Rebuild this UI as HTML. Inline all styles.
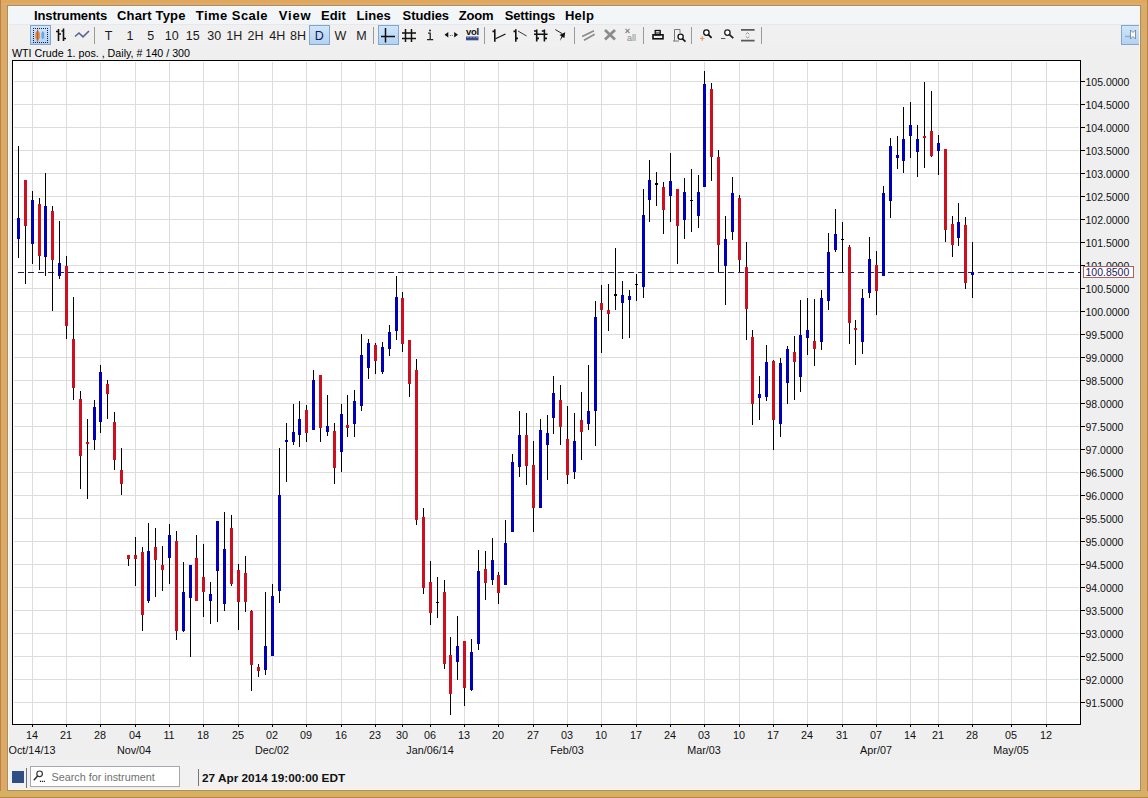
<!DOCTYPE html><html><head><meta charset="utf-8"><style>html,body{margin:0;padding:0;width:1148px;height:798px;overflow:hidden;background:#dba45f}svg{display:block}</style></head><body><svg width="1148" height="798" viewBox="0 0 1148 798" shape-rendering="crispEdges" font-family="Liberation Sans, sans-serif">
<defs><linearGradient id="btn" x1="0" y1="0" x2="0" y2="1"><stop offset="0" stop-color="#cfe6fc"/><stop offset="1" stop-color="#b2d2f2"/></linearGradient></defs>
<rect x="0" y="0" width="1148" height="798" fill="#dcaa64"/>
<rect x="0" y="0" width="1148" height="5" fill="#e2a85a"/>
<rect x="0" y="3" width="1148" height="2" fill="#dcac78"/>
<rect x="0" y="0" width="1" height="798" fill="#b8834a"/>
<rect x="1147" y="0" width="1" height="798" fill="#b8834a"/>
<rect x="1141" y="5" width="6" height="786" fill="#d9ac6a"/>
<rect x="0" y="791" width="1148" height="6" fill="#d8b062"/>
<rect x="0" y="797" width="1148" height="1" fill="#b8864a"/>
<rect x="7" y="5" width="1134" height="786" fill="#a88e68"/>
<rect x="8" y="6" width="1132" height="784" fill="#efefef"/>
<rect x="8" y="6" width="1132" height="18" fill="#f3f6f9"/>
<rect x="8" y="6" width="1132" height="1" fill="#fffbea"/>
<rect x="8" y="24" width="1132" height="1" fill="#e6e8ec"/>
<text x="34.0" y="19.5" font-size="13" font-weight="bold" fill="#000" textLength="73.2">Instruments</text>
<text x="117.0" y="19.5" font-size="13" font-weight="bold" fill="#000" textLength="68.4">Chart Type</text>
<text x="195.8" y="19.5" font-size="13" font-weight="bold" fill="#000" textLength="71.8">Time Scale</text>
<text x="278.8" y="19.5" font-size="13" font-weight="bold" fill="#000" textLength="31.9">View</text>
<text x="321.1" y="19.5" font-size="13" font-weight="bold" fill="#000" textLength="24.8">Edit</text>
<text x="356.4" y="19.5" font-size="13" font-weight="bold" fill="#000" textLength="34.4">Lines</text>
<text x="402.6" y="19.5" font-size="13" font-weight="bold" fill="#000" textLength="46.5">Studies</text>
<text x="458.7" y="19.5" font-size="13" font-weight="bold" fill="#000" textLength="34.8">Zoom</text>
<text x="504.7" y="19.5" font-size="13" font-weight="bold" fill="#000" textLength="50.5">Settings</text>
<text x="565.0" y="19.5" font-size="13" font-weight="bold" fill="#000" textLength="28.9">Help</text>
<rect x="8" y="25" width="1132" height="21" fill="#f0f0f0"/>
<rect x="30.5" y="25.5" width="20" height="19" fill="url(#btn)" stroke="#86a4c8"/>
<rect x="309.5" y="25.5" width="20" height="19" fill="url(#btn)" stroke="#86a4c8"/>
<rect x="378.5" y="25.5" width="20" height="19" fill="url(#btn)" stroke="#86a4c8"/>
<rect x="1121.5" y="25.5" width="18" height="19" fill="url(#btn)" stroke="#86a4c8"/>
<text x="108.5" y="39.5" font-size="12.5" text-anchor="middle" fill="#1a1a1a">T</text>
<text x="130" y="39.5" font-size="12.5" text-anchor="middle" fill="#1a1a1a">1</text>
<text x="150.7" y="39.5" font-size="12.5" text-anchor="middle" fill="#1a1a1a">5</text>
<text x="171.8" y="39.5" font-size="12.5" text-anchor="middle" fill="#1a1a1a">10</text>
<text x="192.8" y="39.5" font-size="12.5" text-anchor="middle" fill="#1a1a1a">15</text>
<text x="214.2" y="39.5" font-size="12.5" text-anchor="middle" fill="#1a1a1a">30</text>
<text x="234.3" y="39.5" font-size="12.5" text-anchor="middle" fill="#1a1a1a">1H</text>
<text x="255.6" y="39.5" font-size="12.5" text-anchor="middle" fill="#1a1a1a">2H</text>
<text x="277.3" y="39.5" font-size="12.5" text-anchor="middle" fill="#1a1a1a">4H</text>
<text x="298" y="39.5" font-size="12.5" text-anchor="middle" fill="#1a1a1a">8H</text>
<text x="319.3" y="39.5" font-size="12.5" text-anchor="middle" fill="#102050">D</text>
<text x="340.4" y="39.5" font-size="12.5" text-anchor="middle" fill="#1a1a1a">W</text>
<text x="361.4" y="39.5" font-size="12.5" text-anchor="middle" fill="#1a1a1a">M</text>
<g shape-rendering="auto">
<rect x="33" y="28" width="1" height="1" fill="#1a1a3a"/>
<rect x="33" y="42" width="1" height="1" fill="#1a1a3a"/>
<rect x="35" y="28" width="1" height="1" fill="#1a1a3a"/>
<rect x="35" y="42" width="1" height="1" fill="#1a1a3a"/>
<rect x="37" y="28" width="1" height="1" fill="#1a1a3a"/>
<rect x="37" y="42" width="1" height="1" fill="#1a1a3a"/>
<rect x="39" y="28" width="1" height="1" fill="#1a1a3a"/>
<rect x="39" y="42" width="1" height="1" fill="#1a1a3a"/>
<rect x="41" y="28" width="1" height="1" fill="#1a1a3a"/>
<rect x="41" y="42" width="1" height="1" fill="#1a1a3a"/>
<rect x="43" y="28" width="1" height="1" fill="#1a1a3a"/>
<rect x="43" y="42" width="1" height="1" fill="#1a1a3a"/>
<rect x="45" y="28" width="1" height="1" fill="#1a1a3a"/>
<rect x="45" y="42" width="1" height="1" fill="#1a1a3a"/>
<rect x="47" y="28" width="1" height="1" fill="#1a1a3a"/>
<rect x="47" y="42" width="1" height="1" fill="#1a1a3a"/>
<rect x="33" y="30" width="1" height="1" fill="#1a1a3a"/>
<rect x="47" y="30" width="1" height="1" fill="#1a1a3a"/>
<rect x="33" y="32" width="1" height="1" fill="#1a1a3a"/>
<rect x="47" y="32" width="1" height="1" fill="#1a1a3a"/>
<rect x="33" y="34" width="1" height="1" fill="#1a1a3a"/>
<rect x="47" y="34" width="1" height="1" fill="#1a1a3a"/>
<rect x="33" y="36" width="1" height="1" fill="#1a1a3a"/>
<rect x="47" y="36" width="1" height="1" fill="#1a1a3a"/>
<rect x="33" y="38" width="1" height="1" fill="#1a1a3a"/>
<rect x="47" y="38" width="1" height="1" fill="#1a1a3a"/>
<rect x="33" y="40" width="1" height="1" fill="#1a1a3a"/>
<rect x="47" y="40" width="1" height="1" fill="#1a1a3a"/>
<path d="M37.6 30 L39.8 33 L39.8 38 L37.6 41 L35.4 38 L35.4 33 Z" fill="#e8803a"/>
<rect x="37.1" y="29.5" width="1" height="12" fill="#b06030"/>
<path d="M42.8 31 L44.2 33 L44.2 37.5 L42.8 39.5 L41.4 37.5 L41.4 33 Z" fill="#6aa4e0"/>
<path d="M58.5 29 V41 M56 31.5 H58.5 M58.5 34 H61 M63.5 28.5 V41 M61.5 31 H63.5 M63.5 38.5 H66" stroke="#111" stroke-width="1.6" fill="none"/>
<polyline points="75,36.5 79,33 83,36.8 89,31" stroke="#5a6488" stroke-width="1.6" fill="none"/>
<path d="M385.5 28 V42.5 M381 36.5 H395" stroke="#111" stroke-width="1.5" fill="none"/>
<path d="M405.5 29 V42 M411.5 29 V42 M402 33 H416 M402 38.5 H416" stroke="#111" stroke-width="1.5" fill="none"/>
<circle cx="430" cy="30.5" r="1" fill="#222"/>
<path d="M428 33.2 H430.2 V39.5 M427 39.6 H433.2" stroke="#222" stroke-width="1.3" fill="none"/>
<path d="M444.5 34.7 L448.3 32 L448.3 37.4 Z M458 34.7 L454.2 32 L454.2 37.4 Z" fill="#111"/>
<circle cx="450.3" cy="35.5" r="0.6" fill="#555"/><circle cx="452.2" cy="35.5" r="0.6" fill="#555"/>
<text x="466" y="35.2" font-size="9.5" font-weight="bold" fill="#111" letter-spacing="-0.3">vol</text>
<rect x="466" y="36.5" width="12.5" height="3.8" fill="#3a4a8a"/>
<path d="M468 36.5 V38 M471 36.5 V38 M474 36.5 V38 M477 36.5 V38" stroke="#c8d0f0" stroke-width="0.8"/>
<path d="M494.8 29.2 V41.7 M492.5 31.4 H494.8" stroke="#111" stroke-width="1.6" fill="none"/>
<path d="M495.5 38.8 L505.5 34" stroke="#111" stroke-width="1.2" fill="none"/>
<path d="M515.8 29.2 V41.7 M513.5 31.4 H515.8 M515.8 38.4 H518" stroke="#111" stroke-width="1.6" fill="none"/>
<path d="M518 31 L526.6 36" stroke="#222" stroke-width="0.9" fill="none"/>
<path d="M536.7 29.5 V41.5 M544.4 29.5 V41.5 M534 34.3 H547.6 M534 31 H536.7 M541.8 31 H544.4 M536.7 38.4 H539 M544.4 38.4 H547" stroke="#111" stroke-width="1.6" fill="none"/>
<path d="M555.3 29.6 L562 33.5" stroke="#222" stroke-width="1" fill="none"/>
<path d="M565.2 32.2 L559.5 35 L561.5 36.2 L559.8 41 L562.6 37 L564.4 38 Z" fill="#111"/>
<path d="M582.2 36.5 L594 30.7 M584 40.2 L594.7 34.3" stroke="#8a8a8a" stroke-width="1.7" fill="none"/>
<path d="M605 30 L615 39.5 M615 30 L605 39.5" stroke="#8c8c8c" stroke-width="2.8" fill="none"/>
<path d="M625.5 28.8 L629.5 33 M629.5 28.8 L625.5 33" stroke="#8a8a8a" stroke-width="1.2" fill="none"/>
<text x="627" y="41" font-size="9" fill="#8a8a8a">all</text>
<rect x="655.2" y="30.5" width="5" height="4.5" fill="none" stroke="#111" stroke-width="1.3"/>
<path d="M655.5 33 H660" stroke="#111" stroke-width="1"/>
<rect x="653" y="34.8" width="10" height="4" fill="none" stroke="#111" stroke-width="1.6"/>
<path d="M674.5 40.8 V29.5 H680 V33" stroke="#777" stroke-width="1" fill="none"/>
<path d="M673 41 H679" stroke="#777" stroke-width="1" fill="none"/>
<circle cx="680.6" cy="36.8" r="2.6" fill="#fff" stroke="#111" stroke-width="1.3"/>
<path d="M682.5 38.8 L685.5 41.6" stroke="#111" stroke-width="1.6"/>
<circle cx="706.4" cy="32.6" r="2.7" fill="#fff" stroke="#111" stroke-width="1.3"/>
<path d="M708.4 34.6 L711.6 37.9" stroke="#111" stroke-width="1.7"/>
<path d="M700 38.5 H704.5 M702.2 36.3 V40.8" stroke="#e89a5a" stroke-width="1.2"/>
<circle cx="727.4" cy="32.6" r="2.7" fill="#fff" stroke="#222" stroke-width="1.3"/>
<path d="M729.4 34.6 L733.3 38.2" stroke="#222" stroke-width="1.7"/>
<path d="M721 38.5 H725.3" stroke="#555" stroke-width="1"/>
<path d="M741 29.8 H754.6 M741 40.7 H754.6" stroke="#5a5a5a" stroke-width="1.7"/>
<path d="M745.8 34.3 L747.6 32.6 L749.4 34.3 M745.8 36.3 L747.6 38 L749.4 36.3" stroke="#888" stroke-width="0.9" fill="none"/>
<path d="M1125 36.5 H1131" stroke="#8ab0d8" stroke-width="1.5"/>
<path d="M1130.5 30 L1133 32.5 L1135.5 30 V39 L1133 36.5 L1130.5 39 Z" fill="#fafcff" stroke="#6a7a90" stroke-width="0.8"/>
</g>
<rect x="94" y="27" width="1" height="17" fill="#9a9a9a"/>
<rect x="373" y="27" width="1" height="17" fill="#9a9a9a"/>
<rect x="484" y="27" width="1" height="17" fill="#9a9a9a"/>
<rect x="574" y="27" width="1" height="17" fill="#9a9a9a"/>
<rect x="643" y="27" width="1" height="17" fill="#9a9a9a"/>
<rect x="691" y="27" width="1" height="17" fill="#9a9a9a"/>
<rect x="761" y="27" width="1" height="17" fill="#9a9a9a"/>
<text x="12" y="56.5" font-size="10.7" fill="#000">WTI Crude 1. pos. , Daily, # 140 / 300</text>
<rect x="12" y="60" width="1069" height="665" fill="#ffffff"/>
<rect x="32" y="62" width="1" height="662" fill="#dcdcdc"/>
<rect x="66" y="62" width="1" height="662" fill="#dcdcdc"/>
<rect x="100" y="62" width="1" height="662" fill="#dcdcdc"/>
<rect x="135" y="62" width="1" height="662" fill="#dcdcdc"/>
<rect x="169" y="62" width="1" height="662" fill="#dcdcdc"/>
<rect x="203" y="62" width="1" height="662" fill="#dcdcdc"/>
<rect x="238" y="62" width="1" height="662" fill="#dcdcdc"/>
<rect x="272" y="62" width="1" height="662" fill="#dcdcdc"/>
<rect x="306" y="62" width="1" height="662" fill="#dcdcdc"/>
<rect x="341" y="62" width="1" height="662" fill="#dcdcdc"/>
<rect x="375" y="62" width="1" height="662" fill="#dcdcdc"/>
<rect x="402" y="62" width="1" height="662" fill="#dcdcdc"/>
<rect x="430" y="62" width="1" height="662" fill="#dcdcdc"/>
<rect x="464" y="62" width="1" height="662" fill="#dcdcdc"/>
<rect x="498" y="62" width="1" height="662" fill="#dcdcdc"/>
<rect x="533" y="62" width="1" height="662" fill="#dcdcdc"/>
<rect x="567" y="62" width="1" height="662" fill="#dcdcdc"/>
<rect x="601" y="62" width="1" height="662" fill="#dcdcdc"/>
<rect x="636" y="62" width="1" height="662" fill="#dcdcdc"/>
<rect x="670" y="62" width="1" height="662" fill="#dcdcdc"/>
<rect x="704" y="62" width="1" height="662" fill="#dcdcdc"/>
<rect x="739" y="62" width="1" height="662" fill="#dcdcdc"/>
<rect x="773" y="62" width="1" height="662" fill="#dcdcdc"/>
<rect x="807" y="62" width="1" height="662" fill="#dcdcdc"/>
<rect x="842" y="62" width="1" height="662" fill="#dcdcdc"/>
<rect x="876" y="62" width="1" height="662" fill="#dcdcdc"/>
<rect x="910" y="62" width="1" height="662" fill="#dcdcdc"/>
<rect x="938" y="62" width="1" height="662" fill="#dcdcdc"/>
<rect x="972" y="62" width="1" height="662" fill="#dcdcdc"/>
<rect x="1011" y="62" width="1" height="662" fill="#dcdcdc"/>
<rect x="1046" y="62" width="1" height="662" fill="#dcdcdc"/>
<rect x="14" y="81" width="1065" height="1" fill="#dcdcdc"/>
<rect x="14" y="104" width="1065" height="1" fill="#dcdcdc"/>
<rect x="14" y="127" width="1065" height="1" fill="#dcdcdc"/>
<rect x="14" y="150" width="1065" height="1" fill="#dcdcdc"/>
<rect x="14" y="173" width="1065" height="1" fill="#dcdcdc"/>
<rect x="14" y="196" width="1065" height="1" fill="#dcdcdc"/>
<rect x="14" y="219" width="1065" height="1" fill="#dcdcdc"/>
<rect x="14" y="242" width="1065" height="1" fill="#dcdcdc"/>
<rect x="14" y="265" width="1065" height="1" fill="#dcdcdc"/>
<rect x="14" y="288" width="1065" height="1" fill="#dcdcdc"/>
<rect x="14" y="311" width="1065" height="1" fill="#dcdcdc"/>
<rect x="14" y="334" width="1065" height="1" fill="#dcdcdc"/>
<rect x="14" y="357" width="1065" height="1" fill="#dcdcdc"/>
<rect x="14" y="380" width="1065" height="1" fill="#dcdcdc"/>
<rect x="14" y="403" width="1065" height="1" fill="#dcdcdc"/>
<rect x="14" y="426" width="1065" height="1" fill="#dcdcdc"/>
<rect x="14" y="449" width="1065" height="1" fill="#dcdcdc"/>
<rect x="14" y="472" width="1065" height="1" fill="#dcdcdc"/>
<rect x="14" y="495" width="1065" height="1" fill="#dcdcdc"/>
<rect x="14" y="518" width="1065" height="1" fill="#dcdcdc"/>
<rect x="14" y="541" width="1065" height="1" fill="#dcdcdc"/>
<rect x="14" y="564" width="1065" height="1" fill="#dcdcdc"/>
<rect x="14" y="587" width="1065" height="1" fill="#dcdcdc"/>
<rect x="14" y="610" width="1065" height="1" fill="#dcdcdc"/>
<rect x="14" y="633" width="1065" height="1" fill="#dcdcdc"/>
<rect x="14" y="656" width="1065" height="1" fill="#dcdcdc"/>
<rect x="14" y="679" width="1065" height="1" fill="#dcdcdc"/>
<rect x="14" y="702" width="1065" height="1" fill="#dcdcdc"/>
<g fill="#20205a">
<rect x="18" y="272" width="6" height="1"/>
<rect x="28" y="272" width="6" height="1"/>
<rect x="38" y="272" width="6" height="1"/>
<rect x="48" y="272" width="6" height="1"/>
<rect x="58" y="272" width="6" height="1"/>
<rect x="68" y="272" width="6" height="1"/>
<rect x="78" y="272" width="6" height="1"/>
<rect x="88" y="272" width="6" height="1"/>
<rect x="98" y="272" width="6" height="1"/>
<rect x="108" y="272" width="6" height="1"/>
<rect x="118" y="272" width="6" height="1"/>
<rect x="128" y="272" width="6" height="1"/>
<rect x="138" y="272" width="6" height="1"/>
<rect x="148" y="272" width="6" height="1"/>
<rect x="158" y="272" width="6" height="1"/>
<rect x="168" y="272" width="6" height="1"/>
<rect x="178" y="272" width="6" height="1"/>
<rect x="188" y="272" width="6" height="1"/>
<rect x="198" y="272" width="6" height="1"/>
<rect x="208" y="272" width="6" height="1"/>
<rect x="218" y="272" width="6" height="1"/>
<rect x="228" y="272" width="6" height="1"/>
<rect x="238" y="272" width="6" height="1"/>
<rect x="248" y="272" width="6" height="1"/>
<rect x="258" y="272" width="6" height="1"/>
<rect x="268" y="272" width="6" height="1"/>
<rect x="278" y="272" width="6" height="1"/>
<rect x="288" y="272" width="6" height="1"/>
<rect x="298" y="272" width="6" height="1"/>
<rect x="308" y="272" width="6" height="1"/>
<rect x="318" y="272" width="6" height="1"/>
<rect x="328" y="272" width="6" height="1"/>
<rect x="338" y="272" width="6" height="1"/>
<rect x="348" y="272" width="6" height="1"/>
<rect x="358" y="272" width="6" height="1"/>
<rect x="368" y="272" width="6" height="1"/>
<rect x="378" y="272" width="6" height="1"/>
<rect x="388" y="272" width="6" height="1"/>
<rect x="398" y="272" width="6" height="1"/>
<rect x="408" y="272" width="6" height="1"/>
<rect x="418" y="272" width="6" height="1"/>
<rect x="428" y="272" width="6" height="1"/>
<rect x="438" y="272" width="6" height="1"/>
<rect x="448" y="272" width="6" height="1"/>
<rect x="458" y="272" width="6" height="1"/>
<rect x="468" y="272" width="6" height="1"/>
<rect x="478" y="272" width="6" height="1"/>
<rect x="488" y="272" width="6" height="1"/>
<rect x="498" y="272" width="6" height="1"/>
<rect x="508" y="272" width="6" height="1"/>
<rect x="518" y="272" width="6" height="1"/>
<rect x="528" y="272" width="6" height="1"/>
<rect x="538" y="272" width="6" height="1"/>
<rect x="548" y="272" width="6" height="1"/>
<rect x="558" y="272" width="6" height="1"/>
<rect x="568" y="272" width="6" height="1"/>
<rect x="578" y="272" width="6" height="1"/>
<rect x="588" y="272" width="6" height="1"/>
<rect x="598" y="272" width="6" height="1"/>
<rect x="608" y="272" width="6" height="1"/>
<rect x="618" y="272" width="6" height="1"/>
<rect x="628" y="272" width="6" height="1"/>
<rect x="638" y="272" width="6" height="1"/>
<rect x="648" y="272" width="6" height="1"/>
<rect x="658" y="272" width="6" height="1"/>
<rect x="668" y="272" width="6" height="1"/>
<rect x="678" y="272" width="6" height="1"/>
<rect x="688" y="272" width="6" height="1"/>
<rect x="698" y="272" width="6" height="1"/>
<rect x="708" y="272" width="6" height="1"/>
<rect x="718" y="272" width="6" height="1"/>
<rect x="728" y="272" width="6" height="1"/>
<rect x="738" y="272" width="6" height="1"/>
<rect x="748" y="272" width="6" height="1"/>
<rect x="758" y="272" width="6" height="1"/>
<rect x="768" y="272" width="6" height="1"/>
<rect x="778" y="272" width="6" height="1"/>
<rect x="788" y="272" width="6" height="1"/>
<rect x="798" y="272" width="6" height="1"/>
<rect x="808" y="272" width="6" height="1"/>
<rect x="818" y="272" width="6" height="1"/>
<rect x="828" y="272" width="6" height="1"/>
<rect x="838" y="272" width="6" height="1"/>
<rect x="848" y="272" width="6" height="1"/>
<rect x="858" y="272" width="6" height="1"/>
<rect x="868" y="272" width="6" height="1"/>
<rect x="878" y="272" width="6" height="1"/>
<rect x="888" y="272" width="6" height="1"/>
<rect x="898" y="272" width="6" height="1"/>
<rect x="908" y="272" width="6" height="1"/>
<rect x="918" y="272" width="6" height="1"/>
<rect x="928" y="272" width="6" height="1"/>
<rect x="938" y="272" width="6" height="1"/>
<rect x="948" y="272" width="6" height="1"/>
<rect x="958" y="272" width="6" height="1"/>
<rect x="968" y="272" width="6" height="1"/>
<rect x="978" y="272" width="6" height="1"/>
<rect x="988" y="272" width="6" height="1"/>
<rect x="998" y="272" width="6" height="1"/>
<rect x="1008" y="272" width="6" height="1"/>
<rect x="1018" y="272" width="6" height="1"/>
<rect x="1028" y="272" width="6" height="1"/>
<rect x="1038" y="272" width="6" height="1"/>
<rect x="1048" y="272" width="6" height="1"/>
<rect x="1058" y="272" width="6" height="1"/>
<rect x="1068" y="272" width="6" height="1"/>
<rect x="1078" y="272" width="2" height="1"/>
</g>
<rect x="18" y="146" width="1" height="112" fill="#000"/>
<rect x="17" y="218" width="3" height="21" fill="#0000b8"/>
<rect x="25" y="180" width="1" height="104" fill="#000"/>
<rect x="24" y="180" width="3" height="46" fill="#cc1020"/>
<rect x="32" y="191" width="1" height="73" fill="#000"/>
<rect x="31" y="200" width="3" height="44" fill="#0000b8"/>
<rect x="39" y="198" width="1" height="72" fill="#000"/>
<rect x="38" y="204" width="3" height="52" fill="#cc1020"/>
<rect x="45" y="173" width="1" height="103" fill="#000"/>
<rect x="44" y="206" width="3" height="51" fill="#0000b8"/>
<rect x="52" y="206" width="1" height="105" fill="#000"/>
<rect x="51" y="211" width="3" height="49" fill="#cc1020"/>
<rect x="59" y="221" width="1" height="58" fill="#000"/>
<rect x="58" y="263" width="3" height="13" fill="#0000b8"/>
<rect x="66" y="256" width="1" height="83" fill="#000"/>
<rect x="65" y="266" width="3" height="60" fill="#cc1020"/>
<rect x="73" y="297" width="1" height="103" fill="#000"/>
<rect x="72" y="339" width="3" height="49" fill="#cc1020"/>
<rect x="80" y="391" width="1" height="98" fill="#000"/>
<rect x="79" y="399" width="3" height="57" fill="#cc1020"/>
<rect x="87" y="419" width="1" height="80" fill="#000"/>
<rect x="86" y="442" width="3" height="2" fill="#cc1020"/>
<rect x="94" y="400" width="1" height="50" fill="#000"/>
<rect x="93" y="407" width="3" height="33" fill="#0000b8"/>
<rect x="100" y="365" width="1" height="68" fill="#000"/>
<rect x="99" y="372" width="3" height="50" fill="#0000b8"/>
<rect x="107" y="380" width="1" height="39" fill="#000"/>
<rect x="106" y="384" width="3" height="10" fill="#cc1020"/>
<rect x="114" y="412" width="1" height="58" fill="#000"/>
<rect x="113" y="422" width="3" height="38" fill="#cc1020"/>
<rect x="121" y="448" width="1" height="47" fill="#000"/>
<rect x="120" y="470" width="3" height="14" fill="#cc1020"/>
<rect x="128" y="555" width="1" height="11" fill="#000"/>
<rect x="127" y="555" width="3" height="4" fill="#cc1020"/>
<rect x="135" y="537" width="1" height="49" fill="#000"/>
<rect x="134" y="555" width="3" height="4" fill="#cc1020"/>
<rect x="142" y="547" width="1" height="84" fill="#000"/>
<rect x="141" y="552" width="3" height="63" fill="#cc1020"/>
<rect x="148" y="523" width="1" height="80" fill="#000"/>
<rect x="147" y="551" width="3" height="50" fill="#0000b8"/>
<rect x="155" y="528" width="1" height="69" fill="#000"/>
<rect x="154" y="547" width="3" height="13" fill="#cc1020"/>
<rect x="162" y="546" width="1" height="45" fill="#000"/>
<rect x="161" y="565" width="3" height="5" fill="#cc1020"/>
<rect x="169" y="524" width="1" height="60" fill="#000"/>
<rect x="168" y="535" width="3" height="23" fill="#0000b8"/>
<rect x="176" y="531" width="1" height="109" fill="#000"/>
<rect x="175" y="541" width="3" height="90" fill="#cc1020"/>
<rect x="183" y="562" width="1" height="70" fill="#000"/>
<rect x="182" y="592" width="3" height="39" fill="#0000b8"/>
<rect x="190" y="565" width="1" height="92" fill="#000"/>
<rect x="189" y="565" width="3" height="33" fill="#0000b8"/>
<rect x="196" y="535" width="1" height="66" fill="#000"/>
<rect x="195" y="558" width="3" height="43" fill="#cc1020"/>
<rect x="203" y="544" width="1" height="73" fill="#000"/>
<rect x="202" y="577" width="3" height="15" fill="#cc1020"/>
<rect x="210" y="582" width="1" height="42" fill="#000"/>
<rect x="209" y="594" width="3" height="7" fill="#0000b8"/>
<rect x="217" y="521" width="1" height="101" fill="#000"/>
<rect x="216" y="521" width="3" height="50" fill="#0000b8"/>
<rect x="224" y="512" width="1" height="99" fill="#000"/>
<rect x="223" y="549" width="3" height="55" fill="#0000b8"/>
<rect x="231" y="515" width="1" height="71" fill="#000"/>
<rect x="230" y="528" width="3" height="56" fill="#cc1020"/>
<rect x="238" y="564" width="1" height="66" fill="#000"/>
<rect x="237" y="570" width="3" height="32" fill="#cc1020"/>
<rect x="245" y="556" width="1" height="56" fill="#000"/>
<rect x="244" y="573" width="3" height="29" fill="#cc1020"/>
<rect x="251" y="610" width="1" height="81" fill="#000"/>
<rect x="250" y="611" width="3" height="54" fill="#cc1020"/>
<rect x="258" y="664" width="1" height="13" fill="#000"/>
<rect x="257" y="667" width="3" height="4" fill="#cc1020"/>
<rect x="265" y="592" width="1" height="83" fill="#000"/>
<rect x="264" y="646" width="3" height="24" fill="#0000b8"/>
<rect x="272" y="584" width="1" height="72" fill="#000"/>
<rect x="271" y="596" width="3" height="60" fill="#0000b8"/>
<rect x="279" y="448" width="1" height="155" fill="#000"/>
<rect x="278" y="495" width="3" height="96" fill="#0000b8"/>
<rect x="286" y="423" width="1" height="59" fill="#000"/>
<rect x="285" y="440" width="3" height="2" fill="#0000b8"/>
<rect x="293" y="404" width="1" height="41" fill="#000"/>
<rect x="292" y="432" width="3" height="10" fill="#0000b8"/>
<rect x="299" y="401" width="1" height="46" fill="#000"/>
<rect x="298" y="419" width="3" height="16" fill="#0000b8"/>
<rect x="306" y="405" width="1" height="37" fill="#000"/>
<rect x="305" y="410" width="3" height="23" fill="#cc1020"/>
<rect x="313" y="370" width="1" height="60" fill="#000"/>
<rect x="312" y="380" width="3" height="50" fill="#0000b8"/>
<rect x="320" y="375" width="1" height="67" fill="#000"/>
<rect x="319" y="375" width="3" height="53" fill="#cc1020"/>
<rect x="327" y="395" width="1" height="41" fill="#000"/>
<rect x="326" y="426" width="3" height="6" fill="#0000b8"/>
<rect x="334" y="423" width="1" height="61" fill="#000"/>
<rect x="333" y="431" width="3" height="37" fill="#cc1020"/>
<rect x="341" y="404" width="1" height="68" fill="#000"/>
<rect x="340" y="414" width="3" height="38" fill="#0000b8"/>
<rect x="347" y="395" width="1" height="42" fill="#000"/>
<rect x="346" y="425" width="3" height="3" fill="#cc1020"/>
<rect x="354" y="390" width="1" height="47" fill="#000"/>
<rect x="353" y="401" width="3" height="23" fill="#0000b8"/>
<rect x="361" y="334" width="1" height="77" fill="#000"/>
<rect x="360" y="355" width="3" height="51" fill="#0000b8"/>
<rect x="368" y="339" width="1" height="40" fill="#000"/>
<rect x="367" y="343" width="3" height="25" fill="#0000b8"/>
<rect x="375" y="343" width="1" height="31" fill="#000"/>
<rect x="374" y="345" width="3" height="16" fill="#cc1020"/>
<rect x="382" y="342" width="1" height="32" fill="#000"/>
<rect x="381" y="347" width="3" height="25" fill="#0000b8"/>
<rect x="389" y="325" width="1" height="31" fill="#000"/>
<rect x="388" y="332" width="3" height="17" fill="#0000b8"/>
<rect x="396" y="276" width="1" height="64" fill="#000"/>
<rect x="395" y="297" width="3" height="34" fill="#0000b8"/>
<rect x="402" y="292" width="1" height="60" fill="#000"/>
<rect x="401" y="298" width="3" height="46" fill="#cc1020"/>
<rect x="409" y="340" width="1" height="57" fill="#000"/>
<rect x="408" y="340" width="3" height="44" fill="#cc1020"/>
<rect x="416" y="359" width="1" height="166" fill="#000"/>
<rect x="415" y="370" width="3" height="150" fill="#cc1020"/>
<rect x="423" y="508" width="1" height="86" fill="#000"/>
<rect x="422" y="517" width="3" height="71" fill="#cc1020"/>
<rect x="430" y="561" width="1" height="64" fill="#000"/>
<rect x="429" y="582" width="3" height="31" fill="#cc1020"/>
<rect x="437" y="577" width="1" height="41" fill="#000"/>
<rect x="436" y="602" width="3" height="1" fill="#000000"/>
<rect x="444" y="580" width="1" height="89" fill="#000"/>
<rect x="443" y="592" width="3" height="72" fill="#cc1020"/>
<rect x="450" y="637" width="1" height="78" fill="#000"/>
<rect x="449" y="655" width="3" height="39" fill="#cc1020"/>
<rect x="457" y="616" width="1" height="64" fill="#000"/>
<rect x="456" y="646" width="3" height="16" fill="#0000b8"/>
<rect x="464" y="641" width="1" height="65" fill="#000"/>
<rect x="463" y="641" width="3" height="47" fill="#cc1020"/>
<rect x="471" y="639" width="1" height="52" fill="#000"/>
<rect x="470" y="652" width="3" height="38" fill="#0000b8"/>
<rect x="478" y="550" width="1" height="100" fill="#000"/>
<rect x="477" y="571" width="3" height="73" fill="#0000b8"/>
<rect x="485" y="551" width="1" height="49" fill="#000"/>
<rect x="484" y="569" width="3" height="14" fill="#cc1020"/>
<rect x="492" y="538" width="1" height="47" fill="#000"/>
<rect x="491" y="560" width="3" height="20" fill="#0000b8"/>
<rect x="498" y="572" width="1" height="32" fill="#000"/>
<rect x="497" y="575" width="3" height="18" fill="#cc1020"/>
<rect x="505" y="520" width="1" height="65" fill="#000"/>
<rect x="504" y="543" width="3" height="42" fill="#0000b8"/>
<rect x="512" y="454" width="1" height="78" fill="#000"/>
<rect x="511" y="462" width="3" height="70" fill="#0000b8"/>
<rect x="519" y="411" width="1" height="66" fill="#000"/>
<rect x="518" y="435" width="3" height="32" fill="#0000b8"/>
<rect x="526" y="413" width="1" height="72" fill="#000"/>
<rect x="525" y="435" width="3" height="31" fill="#cc1020"/>
<rect x="533" y="441" width="1" height="91" fill="#000"/>
<rect x="532" y="465" width="3" height="43" fill="#cc1020"/>
<rect x="540" y="419" width="1" height="89" fill="#000"/>
<rect x="539" y="430" width="3" height="78" fill="#0000b8"/>
<rect x="547" y="415" width="1" height="65" fill="#000"/>
<rect x="546" y="433" width="3" height="12" fill="#0000b8"/>
<rect x="553" y="376" width="1" height="58" fill="#000"/>
<rect x="552" y="393" width="3" height="25" fill="#0000b8"/>
<rect x="560" y="385" width="1" height="60" fill="#000"/>
<rect x="559" y="400" width="3" height="27" fill="#cc1020"/>
<rect x="567" y="406" width="1" height="78" fill="#000"/>
<rect x="566" y="439" width="3" height="36" fill="#cc1020"/>
<rect x="574" y="413" width="1" height="66" fill="#000"/>
<rect x="573" y="441" width="3" height="31" fill="#0000b8"/>
<rect x="581" y="392" width="1" height="68" fill="#000"/>
<rect x="580" y="420" width="3" height="12" fill="#cc1020"/>
<rect x="588" y="365" width="1" height="65" fill="#000"/>
<rect x="587" y="411" width="3" height="13" fill="#0000b8"/>
<rect x="595" y="301" width="1" height="145" fill="#000"/>
<rect x="594" y="317" width="3" height="94" fill="#0000b8"/>
<rect x="601" y="285" width="1" height="68" fill="#000"/>
<rect x="600" y="303" width="3" height="7" fill="#cc1020"/>
<rect x="608" y="284" width="1" height="47" fill="#000"/>
<rect x="607" y="310" width="3" height="4" fill="#cc1020"/>
<rect x="615" y="248" width="1" height="62" fill="#000"/>
<rect x="614" y="294" width="3" height="2" fill="#000000"/>
<rect x="622" y="281" width="1" height="58" fill="#000"/>
<rect x="621" y="295" width="3" height="8" fill="#0000b8"/>
<rect x="629" y="290" width="1" height="48" fill="#000"/>
<rect x="628" y="296" width="3" height="4" fill="#0000b8"/>
<rect x="636" y="274" width="1" height="27" fill="#000"/>
<rect x="635" y="284" width="3" height="1" fill="#000000"/>
<rect x="643" y="189" width="1" height="109" fill="#000"/>
<rect x="642" y="215" width="3" height="72" fill="#0000b8"/>
<rect x="649" y="160" width="1" height="62" fill="#000"/>
<rect x="648" y="180" width="3" height="20" fill="#0000b8"/>
<rect x="656" y="172" width="1" height="34" fill="#000"/>
<rect x="655" y="183" width="3" height="2" fill="#000000"/>
<rect x="663" y="182" width="1" height="52" fill="#000"/>
<rect x="662" y="187" width="3" height="23" fill="#cc1020"/>
<rect x="670" y="153" width="1" height="69" fill="#000"/>
<rect x="669" y="181" width="3" height="15" fill="#0000b8"/>
<rect x="677" y="189" width="1" height="75" fill="#000"/>
<rect x="676" y="189" width="3" height="37" fill="#cc1020"/>
<rect x="684" y="178" width="1" height="61" fill="#000"/>
<rect x="683" y="192" width="3" height="28" fill="#0000b8"/>
<rect x="691" y="169" width="1" height="63" fill="#000"/>
<rect x="690" y="200" width="3" height="1" fill="#000000"/>
<rect x="698" y="175" width="1" height="53" fill="#000"/>
<rect x="697" y="192" width="3" height="24" fill="#0000b8"/>
<rect x="704" y="71" width="1" height="116" fill="#000"/>
<rect x="703" y="84" width="3" height="103" fill="#0000b8"/>
<rect x="711" y="83" width="1" height="98" fill="#000"/>
<rect x="710" y="89" width="3" height="68" fill="#cc1020"/>
<rect x="718" y="150" width="1" height="122" fill="#000"/>
<rect x="717" y="157" width="3" height="88" fill="#cc1020"/>
<rect x="725" y="216" width="1" height="89" fill="#000"/>
<rect x="724" y="239" width="3" height="27" fill="#0000b8"/>
<rect x="732" y="177" width="1" height="63" fill="#000"/>
<rect x="731" y="193" width="3" height="39" fill="#0000b8"/>
<rect x="739" y="195" width="1" height="77" fill="#000"/>
<rect x="738" y="198" width="3" height="62" fill="#cc1020"/>
<rect x="746" y="242" width="1" height="98" fill="#000"/>
<rect x="745" y="267" width="3" height="42" fill="#cc1020"/>
<rect x="752" y="330" width="1" height="95" fill="#000"/>
<rect x="751" y="337" width="3" height="67" fill="#cc1020"/>
<rect x="759" y="376" width="1" height="44" fill="#000"/>
<rect x="758" y="394" width="3" height="4" fill="#0000b8"/>
<rect x="766" y="345" width="1" height="56" fill="#000"/>
<rect x="765" y="362" width="3" height="35" fill="#0000b8"/>
<rect x="773" y="360" width="1" height="90" fill="#000"/>
<rect x="772" y="361" width="3" height="59" fill="#cc1020"/>
<rect x="780" y="358" width="1" height="79" fill="#000"/>
<rect x="779" y="363" width="3" height="61" fill="#0000b8"/>
<rect x="787" y="346" width="1" height="58" fill="#000"/>
<rect x="786" y="349" width="3" height="34" fill="#0000b8"/>
<rect x="794" y="336" width="1" height="64" fill="#000"/>
<rect x="793" y="352" width="3" height="10" fill="#cc1020"/>
<rect x="800" y="300" width="1" height="92" fill="#000"/>
<rect x="799" y="335" width="3" height="42" fill="#0000b8"/>
<rect x="807" y="298" width="1" height="57" fill="#000"/>
<rect x="806" y="330" width="3" height="8" fill="#0000b8"/>
<rect x="814" y="299" width="1" height="67" fill="#000"/>
<rect x="813" y="341" width="3" height="8" fill="#cc1020"/>
<rect x="821" y="290" width="1" height="60" fill="#000"/>
<rect x="820" y="298" width="3" height="44" fill="#0000b8"/>
<rect x="828" y="233" width="1" height="77" fill="#000"/>
<rect x="827" y="252" width="3" height="49" fill="#0000b8"/>
<rect x="835" y="209" width="1" height="43" fill="#000"/>
<rect x="834" y="234" width="3" height="16" fill="#0000b8"/>
<rect x="842" y="222" width="1" height="50" fill="#000"/>
<rect x="841" y="239" width="3" height="1" fill="#000000"/>
<rect x="849" y="245" width="1" height="99" fill="#000"/>
<rect x="848" y="247" width="3" height="76" fill="#cc1020"/>
<rect x="855" y="320" width="1" height="45" fill="#000"/>
<rect x="854" y="328" width="3" height="2" fill="#cc1020"/>
<rect x="862" y="289" width="1" height="65" fill="#000"/>
<rect x="861" y="298" width="3" height="44" fill="#0000b8"/>
<rect x="869" y="237" width="1" height="61" fill="#000"/>
<rect x="868" y="259" width="3" height="34" fill="#0000b8"/>
<rect x="876" y="251" width="1" height="64" fill="#000"/>
<rect x="875" y="265" width="3" height="26" fill="#cc1020"/>
<rect x="883" y="186" width="1" height="90" fill="#000"/>
<rect x="882" y="193" width="3" height="83" fill="#0000b8"/>
<rect x="890" y="138" width="1" height="80" fill="#000"/>
<rect x="889" y="146" width="3" height="55" fill="#0000b8"/>
<rect x="897" y="136" width="1" height="33" fill="#000"/>
<rect x="896" y="155" width="3" height="3" fill="#0000b8"/>
<rect x="903" y="107" width="1" height="66" fill="#000"/>
<rect x="902" y="139" width="3" height="22" fill="#0000b8"/>
<rect x="910" y="102" width="1" height="56" fill="#000"/>
<rect x="909" y="125" width="3" height="11" fill="#0000b8"/>
<rect x="917" y="125" width="1" height="52" fill="#000"/>
<rect x="916" y="139" width="3" height="13" fill="#0000b8"/>
<rect x="924" y="82" width="1" height="86" fill="#000"/>
<rect x="923" y="136" width="3" height="2" fill="#cc1020"/>
<rect x="931" y="91" width="1" height="66" fill="#000"/>
<rect x="930" y="131" width="3" height="25" fill="#cc1020"/>
<rect x="938" y="135" width="1" height="40" fill="#000"/>
<rect x="937" y="143" width="3" height="8" fill="#0000b8"/>
<rect x="945" y="149" width="1" height="93" fill="#000"/>
<rect x="944" y="149" width="3" height="81" fill="#cc1020"/>
<rect x="952" y="216" width="1" height="41" fill="#000"/>
<rect x="951" y="224" width="3" height="21" fill="#cc1020"/>
<rect x="958" y="203" width="1" height="43" fill="#000"/>
<rect x="957" y="222" width="3" height="16" fill="#0000b8"/>
<rect x="965" y="217" width="1" height="72" fill="#000"/>
<rect x="964" y="225" width="3" height="58" fill="#cc1020"/>
<rect x="972" y="242" width="1" height="56" fill="#000"/>
<rect x="971" y="272" width="3" height="3" fill="#0000b8"/>
<rect x="12.5" y="60.5" width="1068" height="664" fill="none" stroke="#000" stroke-width="1"/>
<rect x="1081" y="81" width="4" height="1" fill="#000"/>
<text x="1085.5" y="86" font-size="10.5" fill="#111">105.0000</text>
<rect x="1081" y="104" width="4" height="1" fill="#000"/>
<text x="1085.5" y="109" font-size="10.5" fill="#111">104.5000</text>
<rect x="1081" y="127" width="4" height="1" fill="#000"/>
<text x="1085.5" y="132" font-size="10.5" fill="#111">104.0000</text>
<rect x="1081" y="150" width="4" height="1" fill="#000"/>
<text x="1085.5" y="155" font-size="10.5" fill="#111">103.5000</text>
<rect x="1081" y="173" width="4" height="1" fill="#000"/>
<text x="1085.5" y="178" font-size="10.5" fill="#111">103.0000</text>
<rect x="1081" y="196" width="4" height="1" fill="#000"/>
<text x="1085.5" y="201" font-size="10.5" fill="#111">102.5000</text>
<rect x="1081" y="219" width="4" height="1" fill="#000"/>
<text x="1085.5" y="224" font-size="10.5" fill="#111">102.0000</text>
<rect x="1081" y="242" width="4" height="1" fill="#000"/>
<text x="1085.5" y="247" font-size="10.5" fill="#111">101.5000</text>
<rect x="1081" y="265" width="4" height="1" fill="#000"/>
<text x="1085.5" y="270" font-size="10.5" fill="#111">101.0000</text>
<rect x="1081" y="288" width="4" height="1" fill="#000"/>
<text x="1085.5" y="293" font-size="10.5" fill="#111">100.5000</text>
<rect x="1081" y="311" width="4" height="1" fill="#000"/>
<text x="1085.5" y="316" font-size="10.5" fill="#111">100.0000</text>
<rect x="1081" y="334" width="4" height="1" fill="#000"/>
<text x="1085.5" y="339" font-size="10.5" fill="#111">99.5000</text>
<rect x="1081" y="357" width="4" height="1" fill="#000"/>
<text x="1085.5" y="362" font-size="10.5" fill="#111">99.0000</text>
<rect x="1081" y="380" width="4" height="1" fill="#000"/>
<text x="1085.5" y="385" font-size="10.5" fill="#111">98.5000</text>
<rect x="1081" y="403" width="4" height="1" fill="#000"/>
<text x="1085.5" y="408" font-size="10.5" fill="#111">98.0000</text>
<rect x="1081" y="426" width="4" height="1" fill="#000"/>
<text x="1085.5" y="431" font-size="10.5" fill="#111">97.5000</text>
<rect x="1081" y="449" width="4" height="1" fill="#000"/>
<text x="1085.5" y="454" font-size="10.5" fill="#111">97.0000</text>
<rect x="1081" y="472" width="4" height="1" fill="#000"/>
<text x="1085.5" y="477" font-size="10.5" fill="#111">96.5000</text>
<rect x="1081" y="495" width="4" height="1" fill="#000"/>
<text x="1085.5" y="500" font-size="10.5" fill="#111">96.0000</text>
<rect x="1081" y="518" width="4" height="1" fill="#000"/>
<text x="1085.5" y="523" font-size="10.5" fill="#111">95.5000</text>
<rect x="1081" y="541" width="4" height="1" fill="#000"/>
<text x="1085.5" y="546" font-size="10.5" fill="#111">95.0000</text>
<rect x="1081" y="564" width="4" height="1" fill="#000"/>
<text x="1085.5" y="569" font-size="10.5" fill="#111">94.5000</text>
<rect x="1081" y="587" width="4" height="1" fill="#000"/>
<text x="1085.5" y="592" font-size="10.5" fill="#111">94.0000</text>
<rect x="1081" y="610" width="4" height="1" fill="#000"/>
<text x="1085.5" y="615" font-size="10.5" fill="#111">93.5000</text>
<rect x="1081" y="633" width="4" height="1" fill="#000"/>
<text x="1085.5" y="638" font-size="10.5" fill="#111">93.0000</text>
<rect x="1081" y="656" width="4" height="1" fill="#000"/>
<text x="1085.5" y="661" font-size="10.5" fill="#111">92.5000</text>
<rect x="1081" y="679" width="4" height="1" fill="#000"/>
<text x="1085.5" y="684" font-size="10.5" fill="#111">92.0000</text>
<rect x="1081" y="702" width="4" height="1" fill="#000"/>
<text x="1085.5" y="707" font-size="10.5" fill="#111">91.5000</text>
<rect x="1083.5" y="266.5" width="50" height="11" fill="#fff" stroke="#b06060"/>
<text x="1085.5" y="276" font-size="10.5" fill="#1a2060">100.8500</text>
<rect x="32" y="725" width="1" height="2" fill="#000"/>
<text x="32" y="738.5" font-size="10.8" text-anchor="middle" fill="#111">14</text>
<rect x="66" y="725" width="1" height="2" fill="#000"/>
<text x="66" y="738.5" font-size="10.8" text-anchor="middle" fill="#111">21</text>
<rect x="100" y="725" width="1" height="2" fill="#000"/>
<text x="100" y="738.5" font-size="10.8" text-anchor="middle" fill="#111">28</text>
<rect x="135" y="725" width="1" height="2" fill="#000"/>
<text x="135" y="738.5" font-size="10.8" text-anchor="middle" fill="#111">04</text>
<rect x="169" y="725" width="1" height="2" fill="#000"/>
<text x="169" y="738.5" font-size="10.8" text-anchor="middle" fill="#111">11</text>
<rect x="203" y="725" width="1" height="2" fill="#000"/>
<text x="203" y="738.5" font-size="10.8" text-anchor="middle" fill="#111">18</text>
<rect x="238" y="725" width="1" height="2" fill="#000"/>
<text x="238" y="738.5" font-size="10.8" text-anchor="middle" fill="#111">25</text>
<rect x="272" y="725" width="1" height="2" fill="#000"/>
<text x="272" y="738.5" font-size="10.8" text-anchor="middle" fill="#111">02</text>
<rect x="306" y="725" width="1" height="2" fill="#000"/>
<text x="306" y="738.5" font-size="10.8" text-anchor="middle" fill="#111">09</text>
<rect x="341" y="725" width="1" height="2" fill="#000"/>
<text x="341" y="738.5" font-size="10.8" text-anchor="middle" fill="#111">16</text>
<rect x="375" y="725" width="1" height="2" fill="#000"/>
<text x="375" y="738.5" font-size="10.8" text-anchor="middle" fill="#111">23</text>
<rect x="402" y="725" width="1" height="2" fill="#000"/>
<text x="402" y="738.5" font-size="10.8" text-anchor="middle" fill="#111">30</text>
<rect x="430" y="725" width="1" height="2" fill="#000"/>
<text x="430" y="738.5" font-size="10.8" text-anchor="middle" fill="#111">06</text>
<rect x="464" y="725" width="1" height="2" fill="#000"/>
<text x="464" y="738.5" font-size="10.8" text-anchor="middle" fill="#111">13</text>
<rect x="498" y="725" width="1" height="2" fill="#000"/>
<text x="498" y="738.5" font-size="10.8" text-anchor="middle" fill="#111">20</text>
<rect x="533" y="725" width="1" height="2" fill="#000"/>
<text x="533" y="738.5" font-size="10.8" text-anchor="middle" fill="#111">27</text>
<rect x="567" y="725" width="1" height="2" fill="#000"/>
<text x="567" y="738.5" font-size="10.8" text-anchor="middle" fill="#111">03</text>
<rect x="601" y="725" width="1" height="2" fill="#000"/>
<text x="601" y="738.5" font-size="10.8" text-anchor="middle" fill="#111">10</text>
<rect x="636" y="725" width="1" height="2" fill="#000"/>
<text x="636" y="738.5" font-size="10.8" text-anchor="middle" fill="#111">17</text>
<rect x="670" y="725" width="1" height="2" fill="#000"/>
<text x="670" y="738.5" font-size="10.8" text-anchor="middle" fill="#111">24</text>
<rect x="704" y="725" width="1" height="2" fill="#000"/>
<text x="704" y="738.5" font-size="10.8" text-anchor="middle" fill="#111">03</text>
<rect x="739" y="725" width="1" height="2" fill="#000"/>
<text x="739" y="738.5" font-size="10.8" text-anchor="middle" fill="#111">10</text>
<rect x="773" y="725" width="1" height="2" fill="#000"/>
<text x="773" y="738.5" font-size="10.8" text-anchor="middle" fill="#111">17</text>
<rect x="807" y="725" width="1" height="2" fill="#000"/>
<text x="807" y="738.5" font-size="10.8" text-anchor="middle" fill="#111">24</text>
<rect x="842" y="725" width="1" height="2" fill="#000"/>
<text x="842" y="738.5" font-size="10.8" text-anchor="middle" fill="#111">31</text>
<rect x="876" y="725" width="1" height="2" fill="#000"/>
<text x="876" y="738.5" font-size="10.8" text-anchor="middle" fill="#111">07</text>
<rect x="910" y="725" width="1" height="2" fill="#000"/>
<text x="910" y="738.5" font-size="10.8" text-anchor="middle" fill="#111">14</text>
<rect x="938" y="725" width="1" height="2" fill="#000"/>
<text x="938" y="738.5" font-size="10.8" text-anchor="middle" fill="#111">21</text>
<rect x="972" y="725" width="1" height="2" fill="#000"/>
<text x="972" y="738.5" font-size="10.8" text-anchor="middle" fill="#111">28</text>
<rect x="1011" y="725" width="1" height="2" fill="#000"/>
<text x="1011" y="738.5" font-size="10.8" text-anchor="middle" fill="#111">05</text>
<rect x="1046" y="725" width="1" height="2" fill="#000"/>
<text x="1046" y="738.5" font-size="10.8" text-anchor="middle" fill="#111">12</text>
<text x="32" y="754.2" font-size="10.8" text-anchor="middle" fill="#111">Oct/14/13</text>
<text x="134" y="754.2" font-size="10.8" text-anchor="middle" fill="#111">Nov/04</text>
<text x="272" y="754.2" font-size="10.8" text-anchor="middle" fill="#111">Dec/02</text>
<text x="430" y="754.2" font-size="10.8" text-anchor="middle" fill="#111">Jan/06/14</text>
<text x="567" y="754.2" font-size="10.8" text-anchor="middle" fill="#111">Feb/03</text>
<text x="704" y="754.2" font-size="10.8" text-anchor="middle" fill="#111">Mar/03</text>
<text x="876" y="754.2" font-size="10.8" text-anchor="middle" fill="#111">Apr/07</text>
<text x="1011" y="754.2" font-size="10.8" text-anchor="middle" fill="#111">May/05</text>
<rect x="8" y="760" width="1132" height="26" fill="#f1f1f1"/>
<rect x="8" y="786" width="1132" height="3" fill="#f6f0ea"/>
<rect x="8" y="789" width="1132" height="1" fill="#fff8ec"/>
<rect x="8" y="6" width="1" height="784" fill="#fffbea"/>
<rect x="1139" y="6" width="1" height="784" fill="#fdf8e6"/>
<rect x="12" y="771" width="12" height="12" fill="#2e4e85"/>
<rect x="26" y="768" width="1" height="20" fill="#707070"/>
<rect x="30.5" y="766.5" width="149" height="20" fill="#fff" stroke="#a4a8ae"/>
<g shape-rendering="auto">
<circle cx="39.6" cy="773.8" r="2.8" fill="none" stroke="#333" stroke-width="1.2"/>
<path d="M37.6 775.9 L33.8 780.2" stroke="#333" stroke-width="1.5"/>
<path d="M39.9 781.4 H41 M41.8 781.4 H42.9 M43.8 781.4 H44.9" stroke="#111" stroke-width="1.1"/>
</g>
<text x="51.5" y="781" font-size="10.8" fill="#707070">Search for instrument</text>
<rect x="198" y="769" width="1" height="17" fill="#777"/>
<text x="202" y="781.5" font-size="11.8" font-weight="bold" fill="#111">27 Apr 2014 19:00:00 EDT</text>
</svg></body></html>
